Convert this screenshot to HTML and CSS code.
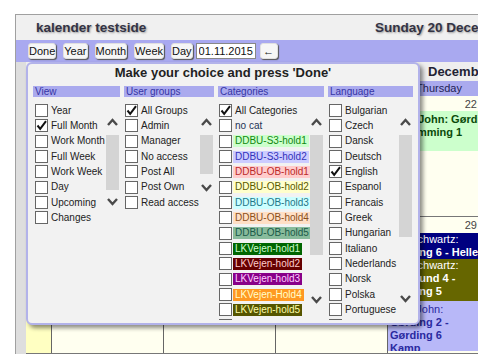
FILE: index.html
```html
<!DOCTYPE html>
<html lang="da">
<head>
  <meta charset="UTF-8" />
  <title>kalender testside</title>
  <link rel="stylesheet" href="styles.css">
</head>
<body>
  <svg class="defs" width="0" height="0">
    <symbol id="chk" viewBox="0 0 11 11"><polyline points="1.5,5.5 4.2,8.8 10,1.2" fill="none" stroke="#111" stroke-width="2"/></symbol>
    <symbol id="up" viewBox="0 0 11 8"><polyline points="1,7 5.5,2 10,7" fill="none" stroke="#4a4a4a" stroke-width="2.4"/></symbol>
    <symbol id="down" viewBox="0 0 11 8"><polyline points="1,1 5.5,6 10,1" fill="none" stroke="#4a4a4a" stroke-width="2.4"/></symbol>
  </svg>

  <div class="page">
    <header class="topbar">
      <h1 class="site-title">kalender testside</h1>
      <div class="today">Sunday 20 December 2015</div>
    </header>

    <div class="toolbar">
      <button class="tb-btn">Done</button>
      <button class="tb-btn">Year</button>
      <button class="tb-btn">Month</button>
      <button class="tb-btn">Week</button>
      <button class="tb-btn">Day</button>
      <input class="date-input" type="text" value="01.11.2015">
      <button class="tb-btn back">&larr;</button>
    </div>

    <div class="calendar">
      <div class="gutter"></div>
      <div class="month">
        <div class="month-title">December 2015</div>
        <div class="daynames">
          <div class="wk-head"></div>
          <div>Monday</div><div>Tuesday</div><div>Wednesday</div><div>Thursday</div>
          <div>Friday</div><div>Saturday</div><div>Sunday</div>
        </div>

        <div class="week w1">
          <div class="wk-num"></div>
          <div class="day"><div class="date">19</div></div>
          <div class="day"><div class="date">20</div></div>
          <div class="day"><div class="date">21</div></div>
          <div class="day">
            <div class="date">22</div>
            <div class="ev ev-green">
              <div>Jens John: Gørding</div>
              <div>- Svømming 1</div>
            </div>
          </div>
          <div class="day"><div class="date">23</div></div>
          <div class="day"><div class="date">24</div></div>
          <div class="day"><div class="date">25</div></div>
        </div>

        <div class="week w2">
          <div class="wk-num"></div>
          <div class="day"><div class="date">26</div></div>
          <div class="day"><div class="date">27</div></div>
          <div class="day"><div class="date">28</div></div>
          <div class="day">
            <div class="date">29</div>
            <div class="ev ev-navy">
              <div>Ole Schwartz:</div>
              <div><b>Gørding 6 - Hellerup</b></div>
            </div>
            <div class="ev ev-olive">
              <div>Ole Schwartz:</div>
              <div><b>Skovlund 4 -</b></div>
              <div><b>Gørding 5</b></div>
            </div>
            <div class="ev ev-blue">
              <div>Jens John:</div>
              <div><b>Gørding 2 -</b></div>
              <div><b>Gørding 6</b></div>
              <div><b><a href="#">Kamp</a></b></div>
            </div>
          </div>
          <div class="day"><div class="date">30</div></div>
          <div class="day"><div class="date">31</div></div>
          <div class="day"><div class="date">1</div></div>
        </div>
      </div>
    </div>
  </div>

  <div class="chooser">
    <h2>Make your choice and press 'Done'</h2>
    <div class="cols">

      <div class="col col-view">
        <div class="col-head">View</div>
        <div class="col-body">
          <div class="list">
            <div class="item"><span class="box"></span><span class="lbl">Year</span></div>
            <div class="item"><span class="box"><svg><use href="#chk"/></svg></span><span class="lbl">Full Month</span></div>
            <div class="item"><span class="box"></span><span class="lbl">Work Month</span></div>
            <div class="item"><span class="box"></span><span class="lbl">Full Week</span></div>
            <div class="item"><span class="box"></span><span class="lbl">Work Week</span></div>
            <div class="item"><span class="box"></span><span class="lbl">Day</span></div>
            <div class="item"><span class="box"></span><span class="lbl">Upcoming</span></div>
            <div class="item"><span class="box"></span><span class="lbl">Changes</span></div>
          </div>
          <div class="scroll">
            <svg class="arrow"><use href="#up"/></svg>
            <div class="thumb"></div>
            <svg class="arrow down"><use href="#down"/></svg>
          </div>
        </div>
      </div>

      <div class="col col-groups">
        <div class="col-head">User groups</div>
        <div class="col-body">
          <div class="list">
            <div class="item"><span class="box"><svg><use href="#chk"/></svg></span><span class="lbl">All Groups</span></div>
            <div class="item"><span class="box"></span><span class="lbl">Admin</span></div>
            <div class="item"><span class="box"></span><span class="lbl">Manager</span></div>
            <div class="item"><span class="box"></span><span class="lbl">No access</span></div>
            <div class="item"><span class="box"></span><span class="lbl">Post All</span></div>
            <div class="item"><span class="box"></span><span class="lbl">Post Own</span></div>
            <div class="item"><span class="box"></span><span class="lbl">Read access</span></div>
          </div>
          <div class="scroll">
            <svg class="arrow"><use href="#up"/></svg>
            <div class="thumb"></div>
            <svg class="arrow down"><use href="#down"/></svg>
          </div>
        </div>
      </div>

      <div class="col col-cats">
        <div class="col-head">Categories</div>
        <div class="col-body">
          <div class="list">
            <div class="item"><span class="box"><svg><use href="#chk"/></svg></span><span class="lbl">All Categories</span></div>
            <div class="item"><span class="box"></span><span class="lbl cat-nocat">no cat</span></div>
            <div class="item"><span class="box"></span><span class="lbl cat-s3h1">DDBU-S3-hold1</span></div>
            <div class="item"><span class="box"></span><span class="lbl cat-s3h2">DDBU-S3-hold2</span></div>
            <div class="item"><span class="box"></span><span class="lbl cat-ob1">DDBU-OB-hold1</span></div>
            <div class="item"><span class="box"></span><span class="lbl cat-ob2">DDBU-OB-hold2</span></div>
            <div class="item"><span class="box"></span><span class="lbl cat-ob3">DDBU-OB-hold3</span></div>
            <div class="item"><span class="box"></span><span class="lbl cat-ob4">DDBU-OB-hold4</span></div>
            <div class="item"><span class="box"></span><span class="lbl cat-ob5">DDBU-OB-hold5</span></div>
            <div class="item"><span class="box"></span><span class="lbl cat-lk1">LKVejen-hold1</span></div>
            <div class="item"><span class="box"></span><span class="lbl cat-lk2">LKVejen-hold2</span></div>
            <div class="item"><span class="box"></span><span class="lbl cat-lk3">LKVejen-hold3</span></div>
            <div class="item"><span class="box"></span><span class="lbl cat-lk4">LKVejen-Hold4</span></div>
            <div class="item"><span class="box"></span><span class="lbl cat-lk5">LKVejen-hold5</span></div>
            <div class="item"><span class="box"></span><span class="lbl">LKVejen-hold6</span></div>
          </div>
          <div class="scroll">
            <svg class="arrow"><use href="#up"/></svg>
            <div class="thumb"></div>
            <svg class="arrow down"><use href="#down"/></svg>
          </div>
        </div>
      </div>

      <div class="col col-lang">
        <div class="col-head">Language</div>
        <div class="col-body">
          <div class="list">
            <div class="item"><span class="box"></span><span class="lbl">Bulgarian</span></div>
            <div class="item"><span class="box"></span><span class="lbl">Czech</span></div>
            <div class="item"><span class="box"></span><span class="lbl">Dansk</span></div>
            <div class="item"><span class="box"></span><span class="lbl">Deutsch</span></div>
            <div class="item"><span class="box"><svg><use href="#chk"/></svg></span><span class="lbl">English</span></div>
            <div class="item"><span class="box"></span><span class="lbl">Espanol</span></div>
            <div class="item"><span class="box"></span><span class="lbl">Francais</span></div>
            <div class="item"><span class="box"></span><span class="lbl">Greek</span></div>
            <div class="item"><span class="box"></span><span class="lbl">Hungarian</span></div>
            <div class="item"><span class="box"></span><span class="lbl">Italiano</span></div>
            <div class="item"><span class="box"></span><span class="lbl">Nederlands</span></div>
            <div class="item"><span class="box"></span><span class="lbl">Norsk</span></div>
            <div class="item"><span class="box"></span><span class="lbl">Polska</span></div>
            <div class="item"><span class="box"></span><span class="lbl">Portuguese</span></div>
            <div class="item"><span class="box"></span><span class="lbl">Romana</span></div>
          </div>
          <div class="scroll">
            <svg class="arrow"><use href="#up"/></svg>
            <div class="thumb"></div>
            <svg class="arrow down"><use href="#down"/></svg>
          </div>
        </div>
      </div>

    </div>
  </div>
</body>
</html>
```

FILE: styles.css
```css
* {
  box-sizing: border-box;
}

html,
body {
  margin: 0;
  overflow: hidden;
}

body {
  position: relative;
  height: 355px;
  background: #fff;
  color: #222;
  font-family: "Liberation Sans", Arial, sans-serif;
}

.defs {
  position: absolute;
  width: 0;
  height: 0;
}

/* page frame */
.page {
  width: 830px;
  margin: 14px 0 0 15px;
  border-left: 1px solid #a0a0a0;
  border-top: 1px solid #a0a0a0;
}

.topbar {
  display: flex;
  align-items: center;
  height: 25px;
  padding-left: 20px;
  background: #f0f0f0;
}

.site-title,
.today {
  margin: 0;
  font-size: 13.5px;
  font-weight: bold;
  color: #333344;
  text-shadow: 1px 1px 2px #9a9a9a;
}

.site-title {
  width: 339px;
}

.toolbar {
  display: flex;
  align-items: center;
  gap: 7px;
  height: 22px;
  padding-left: 12px;
  background: #a9a9f0;
}

.tb-btn {
  height: 16px;
  padding: 0;
  border: 1px solid #e0e0e0;
  border-radius: 3px;
  background: #f6f6f6;
  box-shadow: 1px 1px 1px #555;
  color: #111;
  font: 11px "Liberation Sans", Arial, sans-serif;
  line-height: 14px;
}

.date-input {
  width: 60px;
  height: 16px;
  margin-left: -4px;
  padding: 0 2px;
  border: 1px solid #888;
  background: #fff;
  font: 11px "Liberation Sans", Arial, sans-serif;
  color: #111;
}

.back {
  width: 18px;
  margin-left: -3px;
}

/* calendar behind the chooser */
.calendar {
  display: flex;
}

.gutter {
  flex: none;
  width: 10px;
  background: #dedede;
}

.month {
  flex: none;
}

.month-title {
  height: 19px;
  padding-left: 402px;
  background: #eeeeee;
  font-size: 13px;
  font-weight: bold;
  line-height: 19px;
  color: #223;
}

.daynames {
  display: flex;
  height: 15px;
  background: #aaaaee;
  font-size: 11px;
  line-height: 15px;
  color: #222255;
}

.daynames div {
  width: 112px;
  padding-right: 8px;
  text-align: center;
}

.daynames .wk-head,
.wk-num {
  width: 25px;
  flex: none;
}

.week {
  display: flex;
  border-bottom: 1px solid #777;
}

.w1 {
  height: 121px;
}

.w2 {
  height: 137px;
}

.wk-num {
  background: #ffffc2;
}

.day {
  flex: none;
  width: 112px;
  padding-top: 1px;
  border-left: 1px solid #666;
  background: #fffff0;
}

.date {
  padding-right: 22px;
  text-align: right;
  font-size: 11px;
  line-height: 14px;
  color: #444;
}

.ev {
  padding: 0 2px;
  overflow: hidden;
  white-space: nowrap;
  font-size: 11px;
  line-height: 13px;
}

.ev-green {
  height: 40px;
  padding-top: 2px;
  background: #ccffcc;
  color: #0a4a0a;
  font-weight: bold;
}

.ev-navy {
  margin-top: 1px;
  background: #000080;
  color: #fff;
}

.ev-olive {
  padding-bottom: 3px;
  background: #666600;
  color: #fff;
}

.ev-blue {
  padding-top: 2px;
  height: 50px;
  background: #b8b8f8;
  color: #2a2aa0;
}

.ev a {
  color: inherit;
}

/* the choice popup */
.chooser {
  position: absolute;
  left: 26px;
  top: 62px;
  width: 394px;
  height: 263px;
  padding: 1px 5px 0;
  background: #f2f2f2;
  border: 2px solid #b2b2ea;
  border-radius: 6px;
  box-shadow: 3px 3px 4px rgba(0, 0, 0, 0.45);
}

.chooser h2 {
  margin: 0 0 5px;
  font-size: 13px;
  line-height: 16px;
  text-align: center;
  color: #222;
}

.cols {
  display: flex;
  gap: 4px;
}

.col-view { width: 87px; }
.col-groups { width: 90px; }
.col-cats { width: 106px; }
.col-lang { width: 85px; }

.col-head {
  height: 11px;
  padding-left: 2px;
  background: #aaaaee;
  font-size: 10px;
  line-height: 11px;
  color: #3535a5;
}

.col-body {
  display: flex;
  height: 217px;
  margin-top: 6px;
}

.list {
  flex: 1;
  min-width: 0;
  overflow-x: visible;
  overflow-y: clip;
}

.item {
  display: flex;
  align-items: center;
  height: 15.33px;
  white-space: nowrap;
  font-size: 10px;
  color: #222;
}

.box {
  flex: none;
  width: 13px;
  height: 13px;
  margin-left: 1px;
  border: 1px solid #666;
  background: #fff;
}

.col-view .box {
  margin-left: 2px;
}

.box svg {
  display: block;
  width: 11px;
  height: 11px;
}

.lbl {
  margin-left: 1px;
  padding: 0 2px;
  line-height: 12px;
}

.scroll {
  flex: none;
  display: flex;
  flex-direction: column;
  align-items: center;
  width: 15px;
  padding-top: 15px;
}

.arrow {
  display: block;
  width: 11px;
  height: 8px;
}

.thumb {
  width: 13px;
  margin-top: 9px;
  background: #d4d4d4;
}

.col-view .thumb { height: 55px; }
.col-view .down { margin-top: 8px; }
.col-groups .thumb { height: 39px; }
.col-groups .down { margin-top: 10px; }
.col-cats .thumb { height: 120px; }
.col-cats .down { margin-top: 41px; }
.col-lang .thumb { height: 102px; }
.col-lang .down { margin-top: 58px; }

/* category colours */
.cat-nocat { color: #223355; }
.cat-s3h1 { background: #ccffcc; color: #118811; }
.cat-s3h2 { background: #ccccff; color: #3333bb; }
.cat-ob1 { background: #ffcccc; color: #bb2a2a; }
.cat-ob2 { background: #ffffcc; color: #5a5a00; }
.cat-ob3 { background: #ccffff; color: #227788; }
.cat-ob4 { background: #ffdfc6; color: #8a5020; }
.cat-ob5 { background: #88bb9c; color: #1a5a48; }
.cat-lk1 { background: #006600; color: #ccffcc; }
.cat-lk2 { background: #660000; color: #ffcccc; }
.cat-lk3 { background: #880088; color: #ffccff; }
.cat-lk4 { background: #ff9922; color: #ffffcc; }
.cat-lk5 { background: #555500; color: #ffffaa; }
```
